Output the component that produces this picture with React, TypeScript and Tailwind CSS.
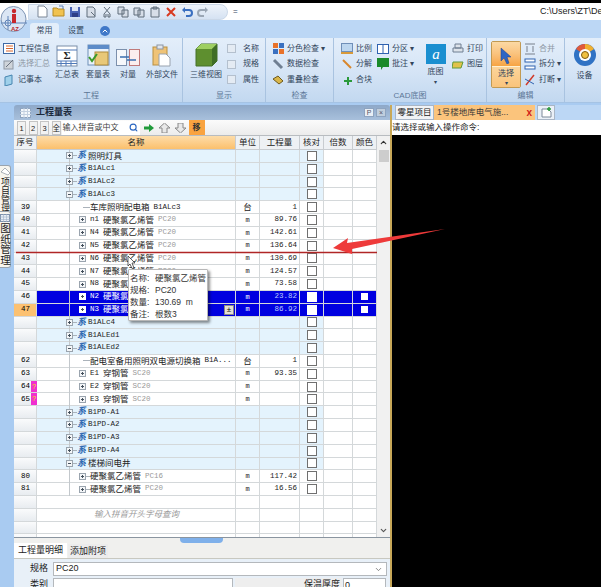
import React from "react";
import { ChevronDown, ChevronUp, Search } from "lucide-react";

const CN = "font-['Liberation_Sans','Noto_Sans_CJK_SC',sans-serif]";
const MONO = "font-['Liberation_Mono','Noto_Sans_CJK_SC',monospace]";

type Row = {
  kind: "group" | "leaf" | "child" | "blank";
  no?: string;
  code?: string;
  name?: string;
  spec?: string;
  unit?: string;
  qty?: string;
  open?: boolean;
  selected?: boolean;
  orange?: boolean;
  flag?: boolean;
  hint?: string;
  noCheck?: boolean;
};

const rows: Row[] = [
  { kind: "group", name: "照明灯具" },
  { kind: "group", code: "B1ALc1" },
  { kind: "group", code: "B1ALc2" },
  { kind: "group", code: "B1ALc3", open: true },
  { kind: "leaf", no: "39", name: "车库照明配电箱", spec: "B1ALc3", unit: "台", qty: "1" },
  { kind: "child", no: "40", code: "n1", name: "硬聚氯乙烯管", spec: "PC20", unit: "m", qty: "89.76" },
  { kind: "child", no: "41", code: "N4", name: "硬聚氯乙烯管", spec: "PC20", unit: "m", qty: "142.61" },
  { kind: "child", no: "42", code: "N5", name: "硬聚氯乙烯管", spec: "PC20", unit: "m", qty: "136.64" },
  { kind: "child", no: "43", code: "N6", name: "硬聚氯乙烯管", spec: "PC20", unit: "m", qty: "130.69" },
  { kind: "child", no: "44", code: "N7", name: "硬聚氯乙烯管", spec: "PC20", unit: "m", qty: "124.57" },
  { kind: "child", no: "45", code: "N8", name: "硬聚氯乙烯管", spec: "PC20", unit: "m", qty: "73.58" },
  { kind: "child", no: "46", code: "N2", name: "硬聚氯", unit: "m", qty: "23.82", selected: true },
  { kind: "child", no: "47", code: "N3", name: "硬聚氯", unit: "m", qty: "86.92", selected: true, orange: true },
  { kind: "group", code: "B1ALc4" },
  { kind: "group", code: "B1ALEd1" },
  { kind: "group", code: "B1ALEd2", open: true },
  { kind: "leaf", no: "62", name: "配电室备用照明双电源切换箱", spec: "B1A...", unit: "台", qty: "1" },
  { kind: "child", no: "63", code: "E1", name: "穿钢管", spec: "SC20", unit: "m", qty: "93.35" },
  { kind: "child", no: "64", code: "E2", name: "穿钢管", spec: "SC20", unit: "m", flag: true },
  { kind: "child", no: "65", code: "E3", name: "穿钢管", spec: "SC20", unit: "m", flag: true },
  { kind: "group", code: "B1PD-A1" },
  { kind: "group", code: "B1PD-A2" },
  { kind: "group", code: "B1PD-A3" },
  { kind: "group", code: "B1PD-A4" },
  { kind: "group", name: "楼梯间电井", open: true },
  { kind: "child", no: "80", name: "硬聚氯乙烯管", spec: "PC16", unit: "m", qty: "117.42" },
  { kind: "child", no: "81", name: "硬聚氯乙烯管", spec: "PC20", unit: "m", qty: "16.56" },
  { kind: "blank", noCheck: true },
  { kind: "blank", noCheck: true, hint: "输入拼音开头字母查询" },
  { kind: "blank", noCheck: true },
  { kind: "blank", noCheck: true },
];

const Plus = ({ open, light }: { open?: boolean; light?: boolean }) => (
  <span
    className={`relative inline-block w-[7px] h-[7px] shrink-0 border ${
      light ? "border-white bg-white" : "border-[#9aa4ae] bg-[#f4f6f8]"
    }`}
  >
    <span className="absolute left-[1px] right-[1px] top-[2px] h-px bg-[#44505c]" />
    {!open && <span className="absolute top-[1px] bottom-[1px] left-[2px] w-px bg-[#44505c]" />}
  </span>
);

const NameCell = ({ row }: { row: Row }) => {
  const c = row.selected ? "text-white" : "text-[#222]";
  if (row.kind === "group") {
    return (
      <div className="flex items-center h-full pl-[29px] relative">
        <span className="absolute left-[32px] top-[-1px] bottom-[-1px] w-px bg-[#c3c8cc]" />
        <span className="relative flex items-center">
          <Plus open={row.open} />
        </span>
        <span className="w-[4px] h-px bg-[#aab2ba]" />
        <span className="text-[9px] italic font-bold text-[#2a66b0] w-[11px] shrink-0">系</span>
        {row.code && <span className={`${MONO} text-[7.5px] text-[#222]`}>{row.code}</span>}
        {row.name && <span className="text-[8.5px] text-[#222]">{row.name}</span>}
      </div>
    );
  }
  if (row.kind === "leaf") {
    return (
      <div className="flex items-center h-full pl-[46px] relative">
        <span className="absolute left-[32px] top-[-1px] bottom-[-1px] w-px bg-[#c3c8cc]" />
        <span className="w-[7px] h-px bg-[#aab2ba]" />
        <span className="text-[8.5px] text-[#222] whitespace-nowrap">{row.name}</span>
        <span className={`${MONO} text-[7.5px] text-[#222] ml-[4px]`}>{row.spec}</span>
      </div>
    );
  }
  if (row.kind === "child") {
    return (
      <div className="flex items-center h-full pl-[42px] relative">
        <span className="absolute left-[32px] top-[-1px] bottom-[-1px] w-px bg-[#c3c8cc]" />
        <Plus light={row.selected} />
        {row.code ? (
          <span className={`${MONO} text-[7.5px] w-[13px] ml-[4px] ${c}`}>{row.code}</span>
        ) : (
          <span className="w-[4px] h-px bg-[#aab2ba]" />
        )}
        <span className={`text-[8.5px] whitespace-nowrap ${c}`}>{row.name}</span>
        {row.spec && <span className={`${MONO} text-[7.5px] ml-[4px] text-[#999]`}>{row.spec}</span>}
        {row.orange && (
          <span className="absolute right-[1px] top-[1px] w-[10px] h-[10px] bg-[#e4e0d4] border border-[#888] flex items-center justify-center text-[8px] leading-none text-black">
            ±
          </span>
        )}
      </div>
    );
  }
  return (
    <div className="flex items-center h-full pl-[57px]">
      {row.hint && <span className="text-[8.5px] italic text-[#9a9a9a] whitespace-nowrap">{row.hint}</span>}
    </div>
  );
};

const Check = ({ white }: { white?: boolean }) => (
  <span className={`block w-[10px] h-[10px] border ${white ? "bg-white border-white" : "bg-white border-[#707070]"}`} />
);

const TableRow = ({ row }: { row: Row }) => {
  const group = row.kind === "group";
  const cell = row.selected ? "bg-[#0000e0]" : group ? "bg-[#e4f3fd]" : "bg-white";
  const border = "border-r border-b border-[#d4d8da]";
  return (
    <div className="flex h-[12.82px] overflow-visible">
      <div
        className={`w-[23px] shrink-0 relative flex items-center pl-[7px] text-[7.5px] ${MONO} ${border} ${
          row.orange ? "bg-[#fcc171]" : "bg-gradient-to-b from-[#fafbfc] to-[#e8ecf0]"
        }`}
      >
        {row.no}
        {row.flag && (
          <span className="absolute right-[-1px] top-0 bottom-0 w-[6px] bg-[#f02fd0] text-[#ffe000] text-[7px] leading-[12px] text-center">
            ?
          </span>
        )}
      </div>
      <div className={`w-[199px] shrink-0 ${border} ${cell}`}>
        <NameCell row={row} />
      </div>
      <div
        className={`w-[24px] shrink-0 flex items-center justify-center ${row.unit === "台" ? "text-[8.5px]" : `${MONO} text-[7px]`} ${border} ${cell} ${
          row.selected ? "text-white" : "text-[#222]"
        }`}
      >
        {row.unit}
      </div>
      <div
        className={`w-[40px] shrink-0 flex items-center justify-end pr-[2px] text-[7.5px] ${MONO} ${border} ${cell} ${
          row.selected ? "text-[#b8c8ff]" : "text-[#222]"
        }`}
      >
        {row.qty}
      </div>
      <div
        className={`w-[24px] shrink-0 flex items-center justify-center ${border} ${
          row.selected ? "bg-[#0000e0]" : group ? "bg-[#e4f3fd]" : "bg-white"
        }`}
      >
        {!row.noCheck && <Check white={row.selected} />}
      </div>
      <div className={`w-[29px] shrink-0 ${border} ${row.selected ? "bg-[#0000e0]" : "bg-white"}`} />
      <div className={`w-[24px] shrink-0 flex items-center justify-center ${border} ${row.selected ? "bg-[#0000e0]" : "bg-white"}`}>
        {row.selected && <span className="block w-[7px] h-[7px] bg-white" />}
      </div>
    </div>
  );
};

/* ---------- small ribbon drawings ---------- */

const Doc = () => (
  <svg width="12" height="13" viewBox="0 0 12 13">
    <path d="M2 1h6l3 3v8H2z" fill="#fff" stroke="#7a8696" />
  </svg>
);
const Folder = () => (
  <svg width="13" height="13" viewBox="0 0 13 13">
    <path d="M1 3h4l1 1h6v7H1z" fill="#f1c24f" stroke="#b58a24" />
    <path d="M7 1h4v3" fill="none" stroke="#5a7fb5" />
  </svg>
);
const Disk = () => (
  <svg width="12" height="12" viewBox="0 0 12 12">
    <rect x="1" y="1" width="10" height="10" fill="#4a63b4" />
    <rect x="3" y="1" width="6" height="4" fill="#dfe6f5" />
    <rect x="3" y="7" width="6" height="4" fill="#2f3f86" />
  </svg>
);
const Gray = ({ d }: { d: string }) => (
  <svg width="12" height="12" viewBox="0 0 12 12">
    <path d={d} fill="#d7dee8" stroke="#5f6c7a" />
  </svg>
);

const QuickBar = () => (
  <div className="flex items-center gap-[4px]">
    <Doc />
    <Folder />
    <Disk />
    <Gray d="M2 1h6l2 2v8H2zM6 6l4 4" />
    <Gray d="M3 1l6 7M9 1L3 8M3 8v3h2V8M9 8v3H7V8" />
    <Gray d="M1 1h6v7H1zM5 4h6v7H5z" />
    <Gray d="M1 2h6v7H1zM5 4h6v7H5z" />
    <Gray d="M2 2h8v9H2zM4 1h4v2H4z" />
    <svg width="12" height="12" viewBox="0 0 12 12">
      <path d="M2 2l8 8M10 2l-8 8" stroke="#d83a20" strokeWidth="2" />
    </svg>
    <svg width="12" height="12" viewBox="0 0 12 12">
      <path d="M3 4h5a2.5 2.5 0 010 6H5" fill="none" stroke="#3a6fc0" strokeWidth="2" />
      <path d="M4 1v6L1 4z" fill="#3a6fc0" />
    </svg>
    <svg width="12" height="12" viewBox="0 0 12 12">
      <path d="M9 4H4a2.5 2.5 0 000 6h3" fill="none" stroke="#9aa6b4" strokeWidth="2" />
      <path d="M8 1v6l3-3z" fill="#9aa6b4" />
    </svg>
  </div>
);

const Logo = () => (
  <svg className="absolute left-0 top-[4px]" width="28" height="30" viewBox="0 0 28 30">
    <circle cx="13.5" cy="15" r="12.5" fill="#dbe6f4" stroke="#7f95b4" />
    <path d="M1 19h26M8 12v14" stroke="#5f83b8" fill="none" />
    <circle cx="8" cy="19" r="3" fill="none" stroke="#5f83b8" />
    <rect x="12" y="10" width="4" height="9" fill="#c8282c" />
    <circle cx="14" cy="7" r="2.2" fill="#c8282c" />
    <text x="11" y="27" fontSize="6" fontWeight="700" fill="#b8282c" fontFamily="Liberation Sans">AZ</text>
  </svg>
);

const SmallItem = ({ icon, label, dim }: { icon: React.ReactNode; label: string; dim?: boolean }) => (
  <div className="flex items-center gap-[3px] h-[15.5px] whitespace-nowrap">
    <span className="w-[12px] h-[12px] flex items-center justify-center shrink-0">{icon}</span>
    <span className={`text-[8px] ${dim ? "text-[#8d97a3]" : "text-[#33465c]"}`}>{label}</span>
  </div>
);

const Big = ({ icon, label, w }: { icon: React.ReactNode; label: string; w: string }) => (
  <div className={`flex flex-col items-center shrink-0 ${w}`}>
    <span className="h-[26px] flex items-end justify-center">{icon}</span>
    <span className="text-[8px] text-[#33465c] mt-[2px] whitespace-nowrap">{label}</span>
  </div>
);

const Group = ({ label, w, children }: { label: string; w: string; children: React.ReactNode }) => (
  <div className={`${w} shrink-0 h-full flex flex-col border-r border-[#a9c3e0]`}>
    <div className="flex-1 flex min-h-0 overflow-hidden">{children}</div>
    <div className="h-[13px] text-center text-[8px] leading-[14px] text-[#5b7696]">{label}</div>
  </div>
);

const Square = ({ c }: { c: string }) => <span className={`block w-[9px] h-[9px] ${c} border border-[#b4c0ce]`} />;

const Ribbon = () => (
  <div className="h-[65px] flex bg-gradient-to-b from-[#e3eefa] via-[#d6e5f6] to-[#c2d8f0] border-b border-[#a5c3e4]">
    <Group label="工程" w="w-[183px]">
      <div className="w-[55px] shrink-0 pl-[3px] pt-[3px] flex flex-col">
        <SmallItem
          label="工程信息"
          icon={
            <svg width="12" height="11" viewBox="0 0 12 11">
              <rect x=".5" y=".5" width="11" height="10" fill="#fff" stroke="#3d6aa6" />
              <path d="M3 3h7M3 5.5h7M3 8h7" stroke="#d8662c" />
            </svg>
          }
        />
        <SmallItem
          dim
          label="选择汇总"
          icon={
            <svg width="12" height="11" viewBox="0 0 12 11">
              <rect x="1" y="2" width="9" height="8" fill="#cfd4da" stroke="#8f98a4" />
              <path d="M3 8l7-7" stroke="#6a7380" />
            </svg>
          }
        />
        <SmallItem
          label="记事本"
          icon={
            <svg width="12" height="12" viewBox="0 0 12 12">
              <path d="M2 3l7-2v9l-7 2z" fill="#9fd0ea" stroke="#4685b0" />
            </svg>
          }
        />
      </div>
      <div className="flex pt-[3px]">
        <Big
          w="w-[24px]"
          label="汇总表"
          icon={
            <svg width="22" height="22" viewBox="0 0 22 22">
              <rect x="1" y="1" width="20" height="20" fill="#fff" stroke="#7a8ea8" />
              <path d="M1 5h20M1 16h20M1 18.5h20M5 16v5M10 16v5M15 16v5" stroke="#4f79b8" />
              <text x="11" y="14" textAnchor="middle" fontSize="11" fontWeight="700" fill="#222" fontFamily="Liberation Serif">Σ</text>
            </svg>
          }
        />
        <Big
          w="w-[38px]"
          label="套量表"
          icon={
            <svg width="23" height="23" viewBox="0 0 23 23">
              <rect x="1" y="1" width="21" height="20" fill="#eaf2fb" stroke="#6f8fb8" />
              <rect x="1" y="1" width="21" height="4" fill="#5d8cc8" />
              <rect x="8" y="8" width="13" height="13" fill="#e8c878" stroke="#ae8a3a" />
              <path d="M2 13l3 4 5-7" fill="none" stroke="#3a9a2a" strokeWidth="2" />
            </svg>
          }
        />
        <Big
          w="w-[22px]"
          label="对量"
          icon={
            <svg width="24" height="18" viewBox="0 0 24 18">
              <rect x=".5" y=".5" width="10" height="16" fill="#f6f8fb" stroke="#7c90ac" />
              <rect x="13.5" y=".5" width="10" height="16" fill="#fbeeee" stroke="#c07a7a" />
              <path d="M4 8h9M11 11H20" stroke="#3a6fb0" strokeWidth="1.5" />
            </svg>
          }
        />
        <Big
          w="w-[44px] ml-[1px]"
          label="外部文件"
          icon={
            <svg width="20" height="23" viewBox="0 0 20 23">
              <rect x="1" y="3" width="14" height="18" fill="#efc377" stroke="#b88f42" />
              <rect x="5" y="1" width="6" height="4" fill="#e2e6ec" stroke="#8b95a4" />
              <path d="M7 10h7l4 4v8H7z" fill="#fff" stroke="#99a2ae" />
            </svg>
          }
        />
      </div>
    </Group>
    <Group label="显示" w="w-[83px]">
      <div className="ml-[7px] pt-[3px]">
        <Big
          w="w-[32px]"
          label="三维视图"
          icon={
            <svg width="23" height="24" viewBox="0 0 23 24">
              <path d="M1 6l5-5h16v17l-5 5H1z" fill="#5e8f2f" stroke="#44702a" />
              <path d="M17 6h-16l5-5h16z" fill="#9ecf62" />
              <path d="M17 6l5-5v17l-5 5z" fill="#3f6e26" />
            </svg>
          }
        />
      </div>
      <div className="ml-[5px] pt-[3px] flex flex-col">
        {["名称", "规格", "属性"].map((t) => (
          <div key={t} className="flex items-center h-[15.5px] gap-[7px]">
            <Square c="bg-[#e4ebf3]" />
            <span className="text-[8px] text-[#33465c]">{t}</span>
          </div>
        ))}
      </div>
    </Group>
    <Group label="检查" w="w-[68px]">
      <div className="pl-[6px] pt-[3px] flex flex-col">
        <SmallItem
          label="分色检查 ▾"
          icon={
            <svg width="11" height="11" viewBox="0 0 11 11">
              <rect width="5" height="5" fill="#e8722a" />
              <rect x="6" width="5" height="5" fill="#3a70c0" />
              <rect y="6" width="5" height="5" fill="#3a70c0" />
              <rect x="6" y="6" width="5" height="5" fill="#e8722a" />
            </svg>
          }
        />
        <SmallItem
          label="数据检查"
          icon={
            <svg width="12" height="12" viewBox="0 0 12 12">
              <path d="M2 2l8 8" stroke="#6f7f92" strokeWidth="3" />
            </svg>
          }
        />
        <SmallItem
          label="重叠检查"
          icon={
            <svg width="12" height="12" viewBox="0 0 12 12">
              <path d="M1 5l5-3 5 5-4 3z" fill="#d9b64a" stroke="#6e5a1e" />
            </svg>
          }
        />
      </div>
    </Group>
    <Group label="CAD底图" w="w-[153px]">
      <div className="pl-[7px] pt-[3px] flex flex-col w-[43px]">
        <SmallItem
          label="比例"
          icon={
            <svg width="12" height="11" viewBox="0 0 12 11">
              <rect x=".5" y=".5" width="11" height="8" fill="#bcd6ef" stroke="#6f8fb8" />
              <path d="M0 10h12" stroke="#d89a3a" strokeWidth="2" />
            </svg>
          }
        />
        <SmallItem
          label="分解"
          icon={
            <svg width="12" height="12" viewBox="0 0 12 12">
              <path d="M2 2l8 8" stroke="#d8862c" strokeWidth="2" />
            </svg>
          }
        />
        <SmallItem
          label="合块"
          icon={
            <svg width="12" height="12" viewBox="0 0 12 12">
              <path d="M3 7h8M7 3v8" stroke="#2a9a3a" strokeWidth="2" />
            </svg>
          }
        />
      </div>
      <div className="pt-[3px] flex flex-col w-[45px]">
        <SmallItem
          label="分区 ▾"
          icon={
            <svg width="12" height="10" viewBox="0 0 12 10">
              <rect x=".5" y=".5" width="11" height="9" fill="#fff" stroke="#2f62b0" />
              <path d="M6 0v10" stroke="#2f62b0" />
            </svg>
          }
        />
        <SmallItem
          label="批注 ▾"
          icon={
            <svg width="12" height="12" viewBox="0 0 12 12">
              <path d="M0 0h12v9H6l-2 3V9H0z" fill="#1a8a2a" />
            </svg>
          }
        />
      </div>
      <div className="w-[27px] flex flex-col items-center pt-[6px]">
        <svg width="20" height="20" viewBox="0 0 20 20">
          <rect width="20" height="20" fill="#1a8fd0" />
          <text x="10" y="15" textAnchor="middle" fontSize="15" fontStyle="italic" fill="#fff" fontFamily="Liberation Serif">a</text>
        </svg>
        <span className="text-[8px] text-[#33465c] mt-[2px]">底图</span>
        <span className="text-[6px] text-[#33465c] leading-[8px]">▾</span>
      </div>
      <div className="pt-[3px] pl-[3px] flex flex-col">
        <SmallItem
          label="打印"
          icon={
            <svg width="12" height="12" viewBox="0 0 12 12">
              <path d="M3 1h6v4H3zM1 5h10v4H1z" fill="#dde3ea" stroke="#6f7f92" />
            </svg>
          }
        />
        <SmallItem
          label="图层"
          icon={
            <svg width="12" height="11" viewBox="0 0 12 11">
              <path d="M1 3h10L9 9H0z" fill="#e2c24a" stroke="#5f9a3a" />
            </svg>
          }
        />
      </div>
    </Group>
    <Group label="编辑" w="w-[78px]">
      <div className="ml-[4px] mt-[3px] w-[30px] h-[47px] flex flex-col items-center rounded-[2px] border border-[#c29a52] overflow-hidden">
        <div className="h-[25px] w-full flex justify-center bg-gradient-to-b from-[#fbd9a4] via-[#fac27c] to-[#f7a442]">
          <svg className="mt-[5px]" width="12" height="17" viewBox="0 0 12 17">
            <path d="M1 1l10 9H7l2 6-2 1-3-6-3 3z" fill="#2f66c4" stroke="#20408a" strokeWidth=".5" />
          </svg>
        </div>
        <div className="flex-1 w-full flex flex-col items-center border-t border-[#fff0d0] bg-gradient-to-b from-[#fcd49a] to-[#f9c47c]">
          <span className="text-[8px] text-[#33465c] mt-[2px] leading-[10px]">选择</span>
          <span className="text-[6px] text-[#33465c] leading-[8px]">▾</span>
        </div>
      </div>
      <div className="pl-[3px] pt-[3px] flex flex-col">
        <SmallItem
          dim
          label="合并"
          icon={
            <svg width="12" height="12" viewBox="0 0 12 12">
              <path d="M1 1h10M1 11h10M3 3v6M9 3v6" stroke="#9aa4b0" strokeWidth="1.5" />
            </svg>
          }
        />
        <SmallItem
          label="拆分 ▾"
          icon={
            <svg width="12" height="12" viewBox="0 0 12 12">
              <rect x="1" y="1" width="10" height="3" fill="#fff" stroke="#2f62b0" />
              <rect x="1" y="8" width="10" height="3" fill="#fff" stroke="#2f62b0" />
            </svg>
          }
        />
        <SmallItem
          label="打断 ▾"
          icon={
            <svg width="12" height="12" viewBox="0 0 12 12">
              <path d="M2 11l8-10" stroke="#d03a2a" strokeWidth="1.5" />
              <path d="M1 5l9 5" stroke="#2f62b0" />
            </svg>
          }
        />
      </div>
    </Group>
    <div className="flex-1 pl-[7px] pt-[5px] flex flex-col items-center pr-[4px]">
      <svg width="24" height="24" viewBox="0 0 24 24">
        <circle cx="12" cy="12" r="11" fill="#2f72c4" />
        <path d="M12 12L12 1A11 11 0 003 6z" fill="#e05a3a" />
        <path d="M12 12L12 1A11 11 0 0121 6z" fill="#f0b030" />
        <circle cx="12" cy="12" r="6" fill="#fff" />
        <circle cx="12" cy="12" r="3.5" fill="#f0c040" stroke="#805a10" />
      </svg>
      <span className="text-[8px] text-[#33465c] mt-[3px]">设备</span>
    </div>
  </div>
);

const SideTab = ({ label, box, text, icon }: { label: string; box: string; text: string; icon: React.ReactNode }) => (
  <div className={`${box} w-[11px] bg-[#f7f5ee] border border-[#9aa4ae] border-l-0 rounded-r-[3px] flex flex-col items-center`}>
    <span className="h-[11px] flex items-center shrink-0">{icon}</span>
    <span className={`${text} leading-[10px] text-[#222] whitespace-nowrap [writing-mode:vertical-lr]`}>{label}</span>
  </div>
);

const headCell = "border-r border-b border-[#c8ccd0]";

export default function App() {
  return (
    <div className={`relative w-[601px] h-[587px] overflow-hidden bg-[#a9cbf1] ${CN}`}>
      <div className="h-[3px] bg-black" />

      {/* title bar */}
      <div className="h-[17px] bg-white flex items-center pl-[28px]">
        <div className="w-[200px] h-[16px] pl-[7px] flex items-center rounded-r-[8px] bg-gradient-to-b from-[#eef3fa] to-[#d5e2f2] border border-[#cbd8e8]">
          <QuickBar />
        </div>
        <span className="ml-[5px] text-[8px] text-[#33465c]">=</span>
        <span className="ml-auto w-[61px] text-[9px] font-['Liberation_Sans'] text-[#222] whitespace-nowrap">C:\Users\ZT\De</span>
      </div>

      {/* ribbon tabs */}
      <div className="h-[18px] bg-[#bcd7f5] flex items-end pl-[30px]">
        <div className="w-[29px] h-[15px] rounded-t-[3px] bg-[#e3eefa] text-center text-[8px] leading-[15px] text-[#33465c]">常用</div>
        <div className="w-[34px] h-[15px] text-center text-[8px] leading-[15px] text-[#33465c]">设置</div>
        <span className="ml-[7px] w-[10px] h-[10px] mb-[2px] rounded-full bg-[#3f78c8] flex items-center justify-center text-white">
          <ChevronUp size={8} strokeWidth={3} />
        </span>
      </div>

      <Ribbon />
      <div className="h-[2px]" />

      <div className="flex h-[482px]">
        {/* left vertical tabs */}
        <div className="w-[14px] shrink-0 pt-[60px] flex flex-col">
          <SideTab
            label="项目管理"
            box="h-[50px]"
            text="text-[9px]"
            icon={
              <svg width="9" height="9" viewBox="0 0 9 9">
                <path d="M0 5l4-4 5 5-2 2z" fill="#fff" stroke="#8a929c" strokeWidth=".7" />
              </svg>
            }
          />
          <SideTab
            label="图纸管理"
            box="h-[57px] mt-[-4px] relative"
            text="text-[10.5px]"
            icon={
              <svg width="10" height="8" viewBox="0 0 10 8">
                <rect x=".5" y=".5" width="9" height="7" fill="#e8eef6" stroke="#7f93ad" />
                <path d="M0 3h10M0 5.5h10M3.5 0v8M6.5 0v8" stroke="#9fb1c8" strokeWidth=".6" />
              </svg>
            }
          />
        </div>

        {/* table panel */}
        <div className="w-[376px] shrink-0 flex flex-col">
          <div className="h-[15px] shrink-0 flex items-center pl-[6px] pr-[4px] rounded-t-[3px] bg-gradient-to-b from-[#8ea8c8] to-[#a8c0dc]">
            <svg width="11" height="10" viewBox="0 0 11 10">
              <rect x=".5" y=".5" width="10" height="9" fill="#f4f8fc" stroke="#8ea4c0" />
              <path d="M0 3.5h11M0 6.5h11M4 0v10M7.5 0v10" stroke="#c3d0e0" />
            </svg>
            <span className="ml-[5px] text-[9px] font-bold text-[#1c2a3c]">工程量表</span>
            <span className="ml-auto flex gap-[2px]">
              <span className="w-[10px] h-[9px] bg-[#e8eef5] border border-[#8ea4c0] text-[7px] leading-[7px] text-center text-[#556]">P</span>
              <span className="w-[10px] h-[9px] bg-[#c0cedd] border border-[#8ea4c0] text-[7px] leading-[7px] text-center text-[#556]">×</span>
            </span>
          </div>
          <div className="h-[16px] shrink-0 flex items-center pl-[3px] bg-gradient-to-b from-[#fbfbfb] to-[#ececec] border-b border-[#b8bcc0]">
            <div className="flex gap-[2.5px]">
              {["1", "2", "3", "全"].map((t) => (
                <span
                  key={t}
                  className="w-[9px] h-[14px] bg-[#f2f2f2] border border-[#c4c4c4] text-[7.5px] leading-[13px] text-center text-[#222]"
                >
                  {t}
                </span>
              ))}
            </div>
            <div className="w-[78px] h-[14px] ml-[1px] bg-white flex items-center pl-[1px] pr-[2px]">
              <span className="text-[8px] text-[#444] whitespace-nowrap">输入拼音或中文</span>
              <Search className="ml-auto text-[#2a66c0]" size={9} strokeWidth={3} />
            </div>
            <svg className="ml-[4px]" width="10" height="10" viewBox="0 0 10 10">
              <path d="M0 3.5h5V1l5 4-5 4V6.5H0z" fill="#1f9a3a" />
            </svg>
            <svg className="ml-[5px]" width="11" height="10" viewBox="0 0 11 10">
              <path d="M5.5 0L11 5H8v5H3V5H0z" fill="#e8e8e8" stroke="#888" />
            </svg>
            <svg className="ml-[5px]" width="11" height="10" viewBox="0 0 11 10">
              <path d="M5.5 10L11 5H8V0H3v5H0z" fill="#e8e8e8" stroke="#888" />
            </svg>
            <span className="ml-[3px] w-[16px] h-[15px] bg-[#f9a340] text-[8px] leading-[15px] font-bold text-center text-[#333]">移</span>
          </div>

          <div className="flex flex-1 min-h-0 bg-white overflow-hidden">
            <div className="w-[363px] shrink-0">
              <div className="flex h-[14px] text-[8.5px] text-[#222] text-center leading-[13px]">
                <div className={`w-[23px] bg-[#eef1f4] ${headCell}`}>序号</div>
                <div className={`w-[199px] bg-gradient-to-b from-[#fddca8] to-[#fbc06c] ${headCell}`}>名称</div>
                <div className={`w-[24px] bg-[#eef1f4] ${headCell}`}>单位</div>
                <div className={`w-[40px] bg-[#eef1f4] ${headCell}`}>工程量</div>
                <div className={`w-[24px] bg-[#eef1f4] ${headCell}`}>核对</div>
                <div className={`w-[29px] bg-[#eef1f4] ${headCell}`}>倍数</div>
                <div className={`w-[24px] bg-[#eef1f4] ${headCell}`}>颜色</div>
              </div>
              {rows.map((r, i) => (
                <TableRow key={i} row={r} />
              ))}
            </div>
            <div className="flex-1 bg-[#f1f1f1] flex flex-col items-center justify-between">
              <div className="flex flex-col items-center">
                <ChevronUp className="mt-[2px] text-[#333]" size={9} strokeWidth={3} />
                <span className="mt-[3px] block w-[10px] h-[12px] bg-[#cdcdcd]" />
              </div>
              <ChevronDown className="mb-[2px] text-[#555]" size={9} strokeWidth={3} />
            </div>
          </div>

          {/* detail area */}
          <div className="relative h-[50px] shrink-0 bg-[#f0f0ee] border-t border-[#8a95a0] overflow-hidden">
            <div className="absolute left-[166px] top-0 w-[43px] h-[5px] bg-[#7fb0ea] rounded-b-[4px]" />
            <div className="flex pt-[5px] h-[21px] items-end border-b border-[#c8c8c0]">
              <div className="w-[53px] h-[15px] bg-white text-[9px] leading-[15px] text-center text-[#222]">工程量明细</div>
              <div className="w-[40px] h-[14px] ml-[1px] bg-[#ececec] text-[9px] leading-[14px] text-center text-[#222]">添加附项</div>
            </div>
            <div className="bg-[#e8f0f8] h-full pt-[3px]">
              <div className="flex items-center h-[14px]">
                <span className="w-[34px] text-right text-[9px] text-[#222]">规格</span>
                <div className="ml-[5px] w-[334px] h-[14px] bg-white border border-[#b4b8bc] flex items-center pl-[2px] text-[9px] font-['Liberation_Sans'] text-[#222]">
                  PC20
                  <ChevronDown className="ml-auto mr-[3px] text-[#666]" size={9} />
                </div>
              </div>
              <div className="flex items-center mt-[2px] h-[14px]">
                <span className="w-[34px] text-right text-[9px] text-[#222]">类别</span>
                <div className="ml-[5px] w-[180px] h-[14px] bg-white border border-[#b4b8bc]" />
                <span className="ml-[2px] w-[107px] h-[14px] bg-[#eeeeee] text-right pr-[2px] text-[9px] text-[#222]">保温厚度</span>
                <div className="ml-[1px] w-[43px] h-[14px] bg-white border border-[#b4b8bc] pl-[1px] text-[9px] text-[#222]">0</div>
              </div>
            </div>
          </div>
        </div>

        <div className="w-[2px] shrink-0 bg-[#c8a858]" />

        {/* right side */}
        <div className="flex-1 flex flex-col min-w-0">
          <div className="h-[15px] shrink-0 flex items-stretch bg-[#bcd7f5]">
            <div className="w-[39px] ml-[3px] bg-[#f0f2f5] border border-[#a9b6c6] text-[8.5px] leading-[13px] text-center text-[#222] shrink-0">零星项目</div>
            <div className="w-[101px] bg-[#fbc47c] flex items-center pl-[3px] text-[8.5px] text-[#3a3a3a] whitespace-nowrap shrink-0">
              1号楼地库电气施...
              <span className="ml-auto mr-[3px] text-[10px] font-bold text-[#d0201a] leading-none">x</span>
            </div>
            <div className="w-[18px] ml-[2px] bg-[#eaf0f7] border border-[#a9b6c6] flex items-center justify-center shrink-0">
              <svg width="11" height="11" viewBox="0 0 11 11">
                <path d="M1 2h6l3 3v5H1z" fill="#fff" stroke="#7c8a9a" />
                <path d="M8 0v4M6 2h4" stroke="#2a9a3a" strokeWidth="1.5" />
              </svg>
            </div>
          </div>
          <div className="h-[15px] shrink-0 bg-white text-[8.5px] leading-[14px] text-[#222] whitespace-nowrap">请选择或输入操作命令:</div>
          <div className="flex-1 bg-black" />
        </div>
      </div>

      {/* annotation overlay: red line and arrow drawn over the screen recording */}
      <svg className="absolute left-0 top-0 pointer-events-none" width="601" height="587" viewBox="0 0 601 587">
        <path d="M16 252.5H377" stroke="#b02626" strokeWidth="1.3" />
        <path d="M333 248L348 238L347 243L445 229L352 249L352 254Z" fill="#ee3a3a" />
      </svg>

      {/* hover tooltip */}
      <div className="absolute left-[128px] top-[269px] w-[80px] h-[52px] bg-white border border-[#b8b8b8] shadow-[2px_2px_3px_rgba(0,0,0,0.45)] rounded-[1px] pl-[1px] pt-[2px] text-[8.5px] leading-[12px] text-[#333]">
        {[
          ["名称:", "硬聚氯乙烯管"],
          ["规格:", "PC20"],
          ["数量:", "130.69  m"],
          ["备注:", "根数3"],
        ].map(([k, v]) => (
          <div key={k} className="flex whitespace-pre">
            <span className="w-[25px] shrink-0">{k}</span>
            <span>{v}</span>
          </div>
        ))}
      </div>

      {/* mouse pointer */}
      <svg className="absolute left-[127px] top-[255px]" width="10" height="14" viewBox="0 0 10 14">
        <path d="M1 1l7 7H5l2 5-2 .5L3 9l-2 2z" fill="#fff" stroke="#222" strokeWidth=".7" />
      </svg>

      <Logo />
    </div>
  );
}
